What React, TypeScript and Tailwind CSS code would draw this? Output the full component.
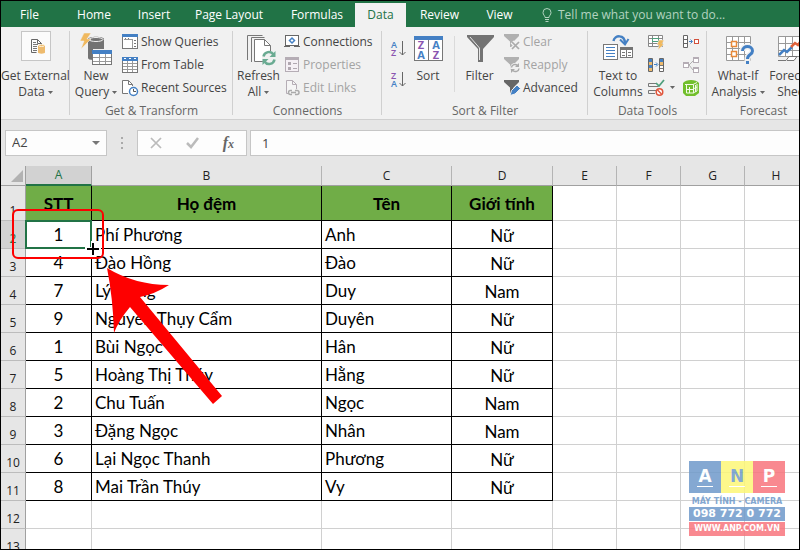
import { ReactNode } from "react";

const UI_FONT = "font-['Open_Sans','Noto_Sans',sans-serif]";
const SHEET_FONT = "font-[Lato,'Open_Sans',sans-serif]";

const tabs = [
  { name: "File", width: "w-[58px] text-left pl-[19px]" },
  { name: "Home", width: "w-[70px]" },
  { name: "Insert", width: "w-[50px]" },
  { name: "Page Layout", width: "w-[100px]" },
  { name: "Formulas", width: "w-[76px]" },
  { name: "Data", width: "w-[51px]" },
  { name: "Review", width: "w-[67px]" },
  { name: "View", width: "w-[53px]" },
];

const columns = ["A", "B", "C", "D", "E", "F", "G", "H"];

const people = [
  ["1", "Phí Phương", "Anh", "Nữ"],
  ["4", "Đào Hồng", "Đào", "Nữ"],
  ["7", "Lý Hùng", "Duy", "Nam"],
  ["9", "Nguyễn Thụy Cẩm", "Duyên", "Nữ"],
  ["1", "Bùi Ngọc", "Hân", "Nữ"],
  ["5", "Hoàng Thị Thúy", "Hằng", "Nữ"],
  ["2", "Chu Tuấn", "Ngọc", "Nam"],
  ["3", "Đặng Ngọc", "Nhân", "Nam"],
  ["6", "Lại Ngọc Thanh", "Phương", "Nữ"],
  ["8", "Mai Trần Thúy", "Vy", "Nữ"],
];

/* ---------- Icons ---------- */

const Icon = ({ size = 16, children }: { size?: number; children: ReactNode }) => (
  <svg
    width={size}
    height={size}
    viewBox={`0 0 ${size} ${size}`}
    fill="none"
    className="shrink-0 overflow-visible"
    aria-hidden="true"
  >
    {children}
  </svg>
);

const Caret = () => (
  <svg width="5" height="3" viewBox="0 0 5 3" className="ml-[3px] inline-block align-middle" aria-hidden="true">
    <path d="M0 0h5L2.5 3z" fill="#666" />
  </svg>
);

const ExternalDataIcon = () => (
  <Icon size={32}>
    <rect x="1.5" y="-1.5" width="29" height="29" fill="#fbfbfb" stroke="#c6c6c6" />
    <path d="M11.5 6.500h6l4 4v2M11.5 6.500v13h5" stroke="#666" />
    <path d="M17.5 6.500v4h4" stroke="#666" />
    <path d="M13 9.500h3M13 11.500h5M13 13.500h4M13 15.500h4M13 17.500h4" stroke="#777" />
    <path d="M18 12.500c0-1.500 7-1.500 7 0v7c0 1.500-7 1.500-7 0z" fill="#eebb6e" />
    <ellipse cx="21.500" cy="12.500" rx="3" ry="1" stroke="#fff3dc" />
  </Icon>
);

const NewQueryIcon = () => (
  <Icon size={32}>
    <path d="M8 6c0-3 16-3 16 0v10h-11v11c-3 0-5-1-5-2z" fill="#737373" />
    <ellipse cx="16" cy="6.500" rx="7" ry="2" stroke="#f1f1f1" fill="#737373" />
    <path d="M4 0h7L7 6h4L1 16l3-8H0z" fill="#f0b95f" stroke="#f1f1f1" strokeWidth="0.500" />
    <rect x="12.500" y="17.500" width="19" height="14" fill="#fff" stroke="#777" />
    <path d="M12 17h20v4H12z" fill="#4480c4" />
    <path d="M19.500 21v10M25.500 21v10M13 24.500h18M13 28.500h18" stroke="#999" />
  </Icon>
);

const ShowQueriesIcon = () => (
  <Icon>
    <rect x="0.500" y="0.500" width="15" height="14" fill="#fff" stroke="#777" />
    <path d="M0 0h16v3H0z" fill="#4480c4" />
    <path d="M10.500 5v9M2 5.500h8" stroke="#999" />
    <path d="M3 4.500h1M6 4.500h1M12 6.500h2M12 9.500h2M12 12.500h2" stroke="#777" />
  </Icon>
);

const FromTableIcon = () => (
  <Icon>
    <rect x="0.500" y="0.500" width="15" height="15" fill="#fff" stroke="#777" />
    <path d="M0 0h16v4H0z" fill="#4480c4" />
    <path d="M2 1.500h2M7 1.500h2M12 1.500h2" stroke="#fff" />
    <path d="M5.500 4v11M10.500 4v11M1 6.500h14M1 9.500h14M1 12.500h14" stroke="#999" />
  </Icon>
);

const RecentSourcesIcon = () => (
  <Icon>
    <path d="M6 13.500H0.500v-13h6l4 4V6" fill="#fff" stroke="#777" />
    <path d="M6.500 0.500v4h4" stroke="#777" />
    <circle cx="11.500" cy="11.500" r="4" fill="#fff" stroke="#4480c4" strokeWidth="1.500" />
    <path d="M11.500 9v2.500h2.500" stroke="#555" />
  </Icon>
);

const RefreshIcon = () => (
  <Icon size={32}>
    <path d="M4.500 27V2.500h15M8.500 29V4.500h13" stroke="#777" />
    <path d="M11.500 6.500h10l6 6v16h-16z" fill="#fff" stroke="#777" />
    <path d="M21.500 6.500v6h6" stroke="#777" />
    <circle cx="26" cy="25" r="7" fill="#f1f1f1" />
    <path d="M20.500 23.500a5.500 5.500 0 0 1 10-2M31.500 26.500a5.500 5.500 0 0 1-10 2" stroke="#6aab92" strokeWidth="2.500" />
    <path d="M32.500 18v6h-6zM19.500 32v-6h6z" fill="#6aab92" />
  </Icon>
);

const ConnectionsIcon = () => (
  <Icon>
    <rect x="1.500" y="1.500" width="13" height="10" fill="#fff" stroke="#666" />
    <path d="M0 12.500h6M10 12.500h6" stroke="#666" />
    <path d="M8 4l2.500 2.500L8 9 5.500 6.500z" stroke="#4480c4" strokeWidth="1.500" />
  </Icon>
);

const PropertiesIcon = () => (
  <Icon>
    <rect x="1.500" y="0.500" width="13" height="14" fill="#f5f0f5" stroke="#b5adb5" />
    <path d="M1 0h14v3H1z" fill="#b5adb5" />
    <path d="M4 5h3v3H4zM4 10h3v3H4z" fill="#b0a8b0" />
    <path d="M9 6.500h4M9 11.500h4" stroke="#b0a8b0" />
  </Icon>
);

const EditLinksIcon = () => (
  <Icon>
    <path d="M4 13.500H2.500v-13h6l4 4V9" fill="#f5f5f5" stroke="#b5adb5" />
    <path d="M8.500 0.500v4h4" stroke="#b5adb5" />
    <path d="M8 14.500H6.500a2 2 0 0 1 0-4H8M11 14.500h2a2 2 0 0 0 0-4h-2M7 12.500h5" stroke="#aaa" strokeWidth="1.500" />
  </Icon>
);

const SortOrderIcon = ({ first, second }: { first: string; second: string }) => (
  <Icon>
    <text x="0" y="7" fontSize="9" fontWeight="600" fill={first === "A" ? "#4480c4" : "#8a55b0"}>
      {first}
    </text>
    <text x="0" y="15" fontSize="9" fontWeight="600" fill={second === "A" ? "#4480c4" : "#8a55b0"}>
      {second}
    </text>
    <path d="M11.500 0v14M8.500 11l3 3 3-3" stroke="#666" />
  </Icon>
);

const SortIcon = () => (
  <Icon size={32}>
    <rect x="2.500" y="3.500" width="28" height="24" fill="#fff" stroke="#777" />
    <path d="M2 3h29v4H2z" fill="#4480c4" />
    <path d="M16.500 7v20" stroke="#777" />
    <g fontSize="11" fontWeight="700" textAnchor="middle">
      <text x="9" y="16" fill="#8a55b0">Z</text>
      <text x="9" y="26" fill="#4480c4">A</text>
      <text x="24" y="16" fill="#4480c4">A</text>
      <text x="24" y="26" fill="#8a55b0">Z</text>
    </g>
  </Icon>
);

const FilterIcon = () => (
  <Icon size={32}>
    <path d="M3 2h27v2L19 16v13h-5V16L3 4z" fill="#737373" />
    <path d="M6 4l9.500 11v12" stroke="#e6e6e6" />
  </Icon>
);

const SmallFunnel = ({ color }: { color: string }) => (
  <path d="M0 0h15v2L9.500 7.500V13H6V7.500L0 2z" fill={color} />
);

const ClearIcon = () => (
  <Icon>
    <SmallFunnel color="#b0b0b0" />
    <path d="M8 8l7 7M15 8l-7 7" stroke="#f1f1f1" strokeWidth="4" />
    <path d="M8 8l7 7M15 8l-7 7" stroke="#aaa" strokeWidth="1.750" />
  </Icon>
);

const ReapplyIcon = () => (
  <Icon>
    <SmallFunnel color="#b0b0b0" />
    <circle cx="11" cy="11" r="5" fill="#f1f1f1" />
    <path d="M7.500 10.500a3.500 3.500 0 0 1 6-2M15 11.500a3.500 3.500 0 0 1-6 2" stroke="#aaa" strokeWidth="1.500" />
    <path d="M15 6v4h-4zM7 16v-4h4z" fill="#aaa" />
  </Icon>
);

const AdvancedIcon = () => (
  <Icon>
    <SmallFunnel color="#666" />
    <path d="M6 15.500l1.500-5 5.500-5.500 3.500 3.500-5.500 5.500z" fill="#4480c4" stroke="#f1f1f1" />
  </Icon>
);

const TextToColumnsIcon = () => (
  <Icon size={32}>
    <rect x="1.500" y="11.500" width="14" height="15" fill="#fff" stroke="#777" />
    <path d="M4 14.500h9M4 17.500h9M4 20.500h9M4 23.500h9" stroke="#4480c4" />
    <rect x="18.500" y="14.500" width="12" height="10" fill="#fff" stroke="#777" />
    <path d="M18 14h13v3H18z" fill="#737373" />
    <path d="M24.500 17v8M20 19.500h3M26 19.500h3M20 22.500h3M26 22.500h3" stroke="#777" />
    <path d="M11.500 8c1-6 11-7 11.500 2" stroke="#4480c4" strokeWidth="2.500" />
    <path d="M18 6.500l5 5 3.500-5.500" stroke="#4480c4" strokeWidth="2" />
  </Icon>
);

const FlashFillIcon = () => (
  <Icon>
    <path d="M0.500 1.500h14v11H0.500zM0 4.500h15M0 9.500h15M4.500 1v12M10.500 1v12" stroke="#888" fill="#fff" />
    <rect x="4.500" y="4.500" width="6" height="3" fill="#fff" stroke="#4e9f7c" />
    <path d="M11 6h5l-2 4h2l-6 6 1-5H9z" fill="#f0b95f" stroke="#f1f1f1" strokeWidth="0.500" />
  </Icon>
);

const RemoveDuplicatesIcon = () => (
  <Icon>
    <path d="M0.500 1.500h4v13h-4zM11.500 1.500h4v13h-4z" fill="#fff" stroke="#666" />
    <path d="M1 2h3v3H1zM1 8h3v3H1zM12 2h3v3h-3z" fill="#4480c4" />
    <path d="M1 5h3v3H1zM1 11h3v3H1zM12 5h3v3h-3z" fill="#eebb6e" />
    <path d="M12 8.500h3M12 11.500h3" stroke="#777" />
    <path d="M6 7.500h3M8 5.500l2 2-2 2" stroke="#4480c4" />
  </Icon>
);

const ValidationIcon = () => (
  <Icon>
    <path d="M8 3.500H0.500v3h10M8 10.500H0.500v3H7" stroke="#777" />
    <path d="M8 3l3 3 5-6" stroke="#4e9f7c" strokeWidth="1.750" />
    <circle cx="11.500" cy="12" r="3.250" fill="#fff" stroke="#e0553c" strokeWidth="1.500" />
    <path d="M9.500 10l4 4" stroke="#e0553c" strokeWidth="1.500" />
  </Icon>
);

const ConsolidateIcon = () => (
  <Icon>
    <path d="M0.500 1.500h4v12h-4zM0 5.500h5M0 9.500h5" stroke="#666" fill="#fff" />
    <path d="M6 7.500h3M7.500 5.500l2 2-2 2" stroke="#4480c4" />
    <rect x="11.500" y="5.500" width="4" height="4" fill="#fff" stroke="#d2503c" />
  </Icon>
);

const RelationshipsIcon = () => (
  <Icon>
    <path d="M6 8l4-4M6 8l4 5" stroke="#b0b0b0" />
    <rect x="0.500" y="5.500" width="5" height="5" fill="#fff" stroke="#b5adb5" />
    <rect x="10.500" y="0.500" width="5" height="5" fill="#fff" stroke="#b5adb5" />
    <rect x="10.500" y="10.500" width="5" height="5" fill="#fff" stroke="#b5adb5" />
    <path d="M1 6.500h4M11 1.500h4M11 11.500h4" stroke="#b5adb5" />
  </Icon>
);

const DataModelIcon = () => (
  <Icon>
    <path d="M0 3c3-4 13-4 16 0v10l-4 3H3l-3-3z" fill="#72bf2c" />
    <path d="M2 4.500h8l4-2M3.500 5v8h7V4.500M6.500 7v6M3 9.500h7M10 13l4-2V4M12.500 5v7M10 9l4-2" stroke="#f3fbe9" />
  </Icon>
);

const WhatIfIcon = () => (
  <Icon size={32}>
    <path
      d="M4.500 3.500h24v24h-24zM4 9.500h25M4 15.500h25M4 21.500h25M10.500 3v25M16.500 3v25M22.500 3v25"
      stroke="#999"
      fill="#fff"
    />
    <rect x="9.500" y="8.500" width="5" height="5" fill="#fff" stroke="#e88a3a" strokeWidth="1.500" />
    <rect x="9.500" y="18.500" width="5" height="5" fill="#fff" stroke="#e88a3a" strokeWidth="1.500" />
    <path d="M20.500 18c0-6 10-6 10 0 0 4-5 3-5 8v5" stroke="#f1f1f1" strokeWidth="6" />
    <path d="M20.500 18c0-6 10-6 10 0 0 4-5 3-5 8" stroke="#4480c4" strokeWidth="3" />
    <path d="M24 28h3v3h-3z" fill="#4480c4" />
  </Icon>
);

const ForecastIcon = () => (
  <Icon size={32}>
    <path
      d="M1.500 3.500h29v20h-29zM1 10.500h29M1 17.500h29M8.500 3v20M15.500 3v20M22.500 3v20"
      stroke="#999"
      fill="#fff"
    />
    <path d="M1 27.500h8l3-4h8l-3 4h-7" stroke="#777" fill="#fff" />
    <path d="M2 22l5-5 3 2 5-5" stroke="#4480c4" strokeWidth="2.500" />
    <path d="M14 14l4-4 3 2 6-8" stroke="#e0633c" strokeWidth="2.500" />
  </Icon>
);

/* ---------- Ribbon pieces ---------- */

const BigButton = ({
  icon,
  lines,
  caret,
  className = "",
}: {
  icon: ReactNode;
  lines: string[];
  caret?: boolean;
  className?: string;
}) => (
  <button className={`flex shrink-0 flex-col items-center whitespace-nowrap pt-[3px] leading-4 ${className}`}>
    <span className="mb-[3px]">{icon}</span>
    {lines.map((line, i) => (
      <span key={line}>
        {line}
        {caret && i === lines.length - 1 && <Caret />}
      </span>
    ))}
  </button>
);

const RowButton = ({ icon, label, disabled }: { icon: ReactNode; label: string; disabled?: boolean }) => (
  <button disabled={disabled} className="flex h-[23px] items-center gap-[3px] whitespace-nowrap disabled:text-[#a3a3a3]">
    {icon}
    {label}
  </button>
);

const IconButton = ({ label, children }: { label: string; children: ReactNode }) => (
  <button aria-label={label} className="flex h-[23px] items-center">
    {children}
  </button>
);

const Group = ({ label, className, children }: { label?: string; className: string; children: ReactNode }) => (
  <section className={`relative flex shrink-0 flex-col pt-[3px] ${className}`}>
    <div className="flex h-[73px]">{children}</div>
    {label && <h2 className="text-center leading-4 text-[#666]">{label}</h2>}
    <span className="absolute bottom-1 right-0 top-1 w-px bg-[#d0d0d0]" />
  </section>
);

const Ribbon = () => (
  <div className="flex h-[93px] shrink-0 overflow-hidden border-b border-[#cfcfcf] bg-[#f1f1f1] text-[#444]">
    <Group className="w-[69px]">
      <BigButton icon={<ExternalDataIcon />} lines={["Get External", "Data"]} caret className="w-full" />
    </Group>

    <Group label="Get & Transform" className="w-[163px]">
      <BigButton icon={<NewQueryIcon />} lines={["New", "Query"]} caret className="w-[52px]" />
      <div>
        <RowButton icon={<ShowQueriesIcon />} label="Show Queries" />
        <RowButton icon={<FromTableIcon />} label="From Table" />
        <RowButton icon={<RecentSourcesIcon />} label="Recent Sources" />
      </div>
    </Group>

    <Group label="Connections" className="w-[149px]">
      <BigButton icon={<RefreshIcon />} lines={["Refresh", "All"]} caret className="w-[51px]" />
      <div>
        <RowButton icon={<ConnectionsIcon />} label="Connections" />
        <RowButton icon={<PropertiesIcon />} label="Properties" disabled />
        <RowButton icon={<EditLinksIcon />} label="Edit Links" disabled />
      </div>
    </Group>

    <Group label="Sort & Filter" className="w-[206px]">
      <div className="flex w-7 flex-col items-end gap-2 pr-[3px] pt-[7px]">
        <IconButton label="Sort A to Z">
          <SortOrderIcon first="A" second="Z" />
        </IconButton>
        <IconButton label="Sort Z to A">
          <SortOrderIcon first="Z" second="A" />
        </IconButton>
      </div>
      <BigButton icon={<SortIcon />} lines={["Sort"]} className="w-9" />
      <span className="ml-2 mt-1.5 h-14 w-px bg-[#dadada]" />
      <BigButton icon={<FilterIcon />} lines={["Filter"]} className="w-[49px]" />
      <div>
        <RowButton icon={<ClearIcon />} label="Clear" disabled />
        <RowButton icon={<ReapplyIcon />} label="Reapply" disabled />
        <RowButton icon={<AdvancedIcon />} label="Advanced" />
      </div>
    </Group>

    <Group label="Data Tools" className="w-[119px]">
      <BigButton icon={<TextToColumnsIcon />} lines={["Text to", "Columns"]} className="w-[60px]" />
      <div className="w-[35px]">
        <IconButton label="Flash Fill">
          <FlashFillIcon />
        </IconButton>
        <IconButton label="Remove Duplicates">
          <RemoveDuplicatesIcon />
        </IconButton>
        <IconButton label="Data Validation">
          <ValidationIcon />
          <span className="ml-[3px] flex">
            <Caret />
          </span>
        </IconButton>
      </div>
      <div>
        <IconButton label="Consolidate">
          <ConsolidateIcon />
        </IconButton>
        <IconButton label="Relationships">
          <RelationshipsIcon />
        </IconButton>
        <IconButton label="Manage Data Model">
          <DataModelIcon />
        </IconButton>
      </div>
    </Group>

    <Group label="Forecast" className="w-[113px]">
      <BigButton icon={<WhatIfIcon />} lines={["What-If", "Analysis"]} caret className="w-[62px]" />
      <BigButton icon={<ForecastIcon />} lines={["Forecast", "Sheet"]} className="w-12" />
    </Group>
  </div>
);

const TabBar = () => (
  <nav className="flex h-[26px] shrink-0 items-end whitespace-nowrap bg-[#217346] text-white">
    {tabs.map((tab) => (
      <button
        key={tab.name}
        className={`h-6 shrink-0 ${tab.width} ${tab.name === "Data" ? "bg-[#f1f1f1] text-[#217346]" : ""}`}
      >
        {tab.name}
      </button>
    ))}
    <button className="ml-4 flex h-6 items-center gap-1.5 text-[#b3d3c0]">
      <svg width="10" height="14" viewBox="0 0 10 14" fill="none" stroke="#b3d3c0" aria-hidden="true">
        <path d="M3 9.500C3 7.500 1 7 1 4.500a4 4 0 0 1 8 0C9 7 7 7.500 7 9.500zM3 11.500h4M3.500 13.500h3" />
      </svg>
      Tell me what you want to do...
    </button>
  </nav>
);

const FormulaBar = () => (
  <div className="flex shrink-0 items-center bg-[#e6e6e6] py-[10px] pl-1 text-[#444]">
    <div className="flex h-[26px] w-[102px] items-center border border-[#c6c6c6] bg-[#fdfdfd] px-1.5">
      <input aria-label="Name box" defaultValue="A2" className="w-full min-w-0 bg-transparent text-[13px] outline-none" />
      <svg width="8" height="4" viewBox="0 0 8 4" className="shrink-0" aria-hidden="true">
        <path d="M0 0h8L4 4z" fill="#777" />
      </svg>
    </div>
    <svg width="3" height="12" viewBox="0 0 3 12" className="ml-3.5 mr-[13px]" aria-hidden="true">
      <path d="M0 0h2v2H0zM0 5h2v2H0zM0 10h2v2H0z" fill="#aaa" />
    </svg>
    <div className="flex h-[26px] w-[110px] shrink-0 items-center justify-between border border-[#c6c6c6] bg-[#fdfdfd] px-3">
      <button aria-label="Cancel">
        <svg width="12" height="12" viewBox="0 0 12 12" fill="none" aria-hidden="true">
          <path d="M1 1l10 10M11 1L1 11" stroke="#bbb" strokeWidth="1.750" />
        </svg>
      </button>
      <button aria-label="Enter">
        <svg width="13" height="12" viewBox="0 0 13 12" fill="none" aria-hidden="true">
          <path d="M1 6l4 4 7-9" stroke="#bbb" strokeWidth="2.500" />
        </svg>
      </button>
      <button
        aria-label="Insert function"
        className="font-['Liberation_Serif',serif] text-[16px] font-bold italic leading-5 text-[#666]"
      >
        f<span className="text-[12px]">x</span>
      </button>
    </div>
    <input
      aria-label="Formula"
      defaultValue="1"
      className="ml-[3px] h-[26px] min-w-0 flex-1 border border-r-0 border-[#c6c6c6] bg-[#fdfdfd] px-[11px] text-[13px] outline-none"
    />
  </div>
);

/* ---------- Sheet ---------- */

const RowHeader = ({ n, active }: { n: number; active?: boolean }) => (
  <th
    scope="row"
    className={`border-b border-r border-b-[#bcbcbc] p-0 align-bottom text-[12px] font-normal leading-[18px] ${UI_FONT} ${
      active ? "border-r-[#217346] bg-[#d2d2d2] text-[#217346]" : "border-r-[#a0a0a0] bg-[#e6e6e6] text-[#222]"
    }`}
  >
    {n}
  </th>
);

const EmptyCells = ({ count }: { count: number }) => (
  <>
    {Array.from({ length: count }).map((_, i) => (
      <td key={i} className="border-b border-r border-[#d0d0d0]" />
    ))}
  </>
);

const Sheet = () => (
  <table
    className={`w-full min-w-[807px] table-fixed border-separate border-spacing-0 bg-white text-[17px] leading-6 text-black ${SHEET_FONT}`}
  >
    <colgroup>
      <col className="w-[25px]" />
      <col className="w-[66px]" />
      <col className="w-[230px]" />
      <col className="w-[130px]" />
      <col className="w-[101px]" />
      <col className="w-16" />
      <col className="w-16" />
      <col className="w-16" />
      <col />
    </colgroup>
    <thead>
      <tr className={`h-5 text-[12px] leading-[18px] ${UI_FONT}`}>
        <td className="border-b border-r border-[#a0a0a0] bg-[#e6e6e6] p-0 pl-2.5">
          <svg width="12" height="12" viewBox="0 0 12 12" aria-hidden="true">
            <path d="M12 0v12H0z" fill="#b2b2b2" />
          </svg>
        </td>
        {columns.map((name) => (
          <th
            key={name}
            scope="col"
            className={`border-r p-0 font-normal ${
              name === "A"
                ? "border-b-2 border-b-[#217346] border-r-[#a0a0a0] bg-[#d2d2d2] text-[#217346]"
                : "border-b border-b-[#a0a0a0] border-r-[#b4b4b4] bg-[#e6e6e6] text-[#222]"
            }`}
          >
            {name}
          </th>
        ))}
      </tr>
    </thead>
    <tbody>
      <tr className="h-[35px]">
        <RowHeader n={1} />
        {["STT", "Họ đệm", "Tên", "Giới tính"].map((title) => (
          <td key={title} className="border-b border-r border-black bg-[#70ad47] p-0 pt-0.5 text-center font-bold">
            {title}
          </td>
        ))}
        <EmptyCells count={4} />
      </tr>
      {people.map(([order, family, given, gender], i) => (
        <tr key={i} className="h-7">
          <RowHeader n={i + 2} active={i === 0} />
          <td className="relative border-b border-r border-black p-0 text-center">
            {order}
            {i === 0 && <span className="absolute -inset-px border-2 border-[#217346]" />}
          </td>
          <td className="border-b border-r border-black p-0 pl-[3px]">{family}</td>
          <td className="border-b border-r border-black p-0 pl-[3px]">{given}</td>
          <td className="border-b border-r border-black p-0 pt-[3px] text-center">{gender}</td>
          <EmptyCells count={4} />
        </tr>
      ))}
      {[12, 13].map((n) => (
        <tr key={n} className="h-7">
          <RowHeader n={n} />
          <EmptyCells count={8} />
        </tr>
      ))}
    </tbody>
  </table>
);

// Red frame, fill handle cursor and arrow drawn over the cells
const Annotation = () => (
  <svg
    width="240"
    height="250"
    viewBox="0 0 240 250"
    fill="none"
    className="pointer-events-none absolute left-0 top-0"
    aria-hidden="true"
  >
    <rect x="12" y="44" width="90" height="48" rx="5" stroke="#fe0000" strokeWidth="2" />
    <path d="M106 102Q134 119 168 119Q154 128 139 131L221 230L212 238L129 141Q118 154 113 167Q112 132 106 102z" fill="#fe0000" />
    <path d="M92 75v16M84 83h16" stroke="#fff" strokeWidth="4" />
    <path d="M92 77v12M86 83h12" stroke="#000" strokeWidth="2" />
  </svg>
);

const Watermark = () => (
  <div className="absolute bottom-[13px] right-3.5 w-24 text-center font-['DejaVu_Sans',sans-serif] font-bold opacity-85">
    <div className="grid h-8 grid-cols-3 text-[17px] leading-[30px] text-white">
      <span className="relative bg-[#6f9acb]">
        A<i className="absolute inset-x-2 bottom-1.5 h-px bg-white" />
      </span>
      <span className="relative bg-[#fdf777] text-[#6f9acb]">
        N<i className="absolute inset-x-2 bottom-1.5 h-px bg-white" />
      </span>
      <span className="relative bg-[#f8757d]">
        P<i className="absolute inset-x-2 bottom-1.5 h-px bg-white" />
      </span>
    </div>
    <div className="mt-1 whitespace-nowrap text-[8px] leading-[10px] text-[#6f9acb]">MÁY TÍNH - CAMERA</div>
    <div className="whitespace-nowrap bg-[#6f9acb] text-[11px] leading-[14px] text-white">098 772 0 772</div>
    <div className="mt-px whitespace-nowrap bg-[#f8757d] text-[8px] leading-[14px] text-white">WWW.ANP.COM.VN</div>
  </div>
);

export default function App() {
  return (
    <div className={`flex h-screen flex-col overflow-hidden border border-black bg-white text-[12px] ${UI_FONT}`}>
      <TabBar />
      <Ribbon />
      <FormulaBar />
      <main className="relative min-h-0 flex-1 overflow-hidden">
        <Sheet />
        <Annotation />
        <Watermark />
      </main>
    </div>
  );
}
